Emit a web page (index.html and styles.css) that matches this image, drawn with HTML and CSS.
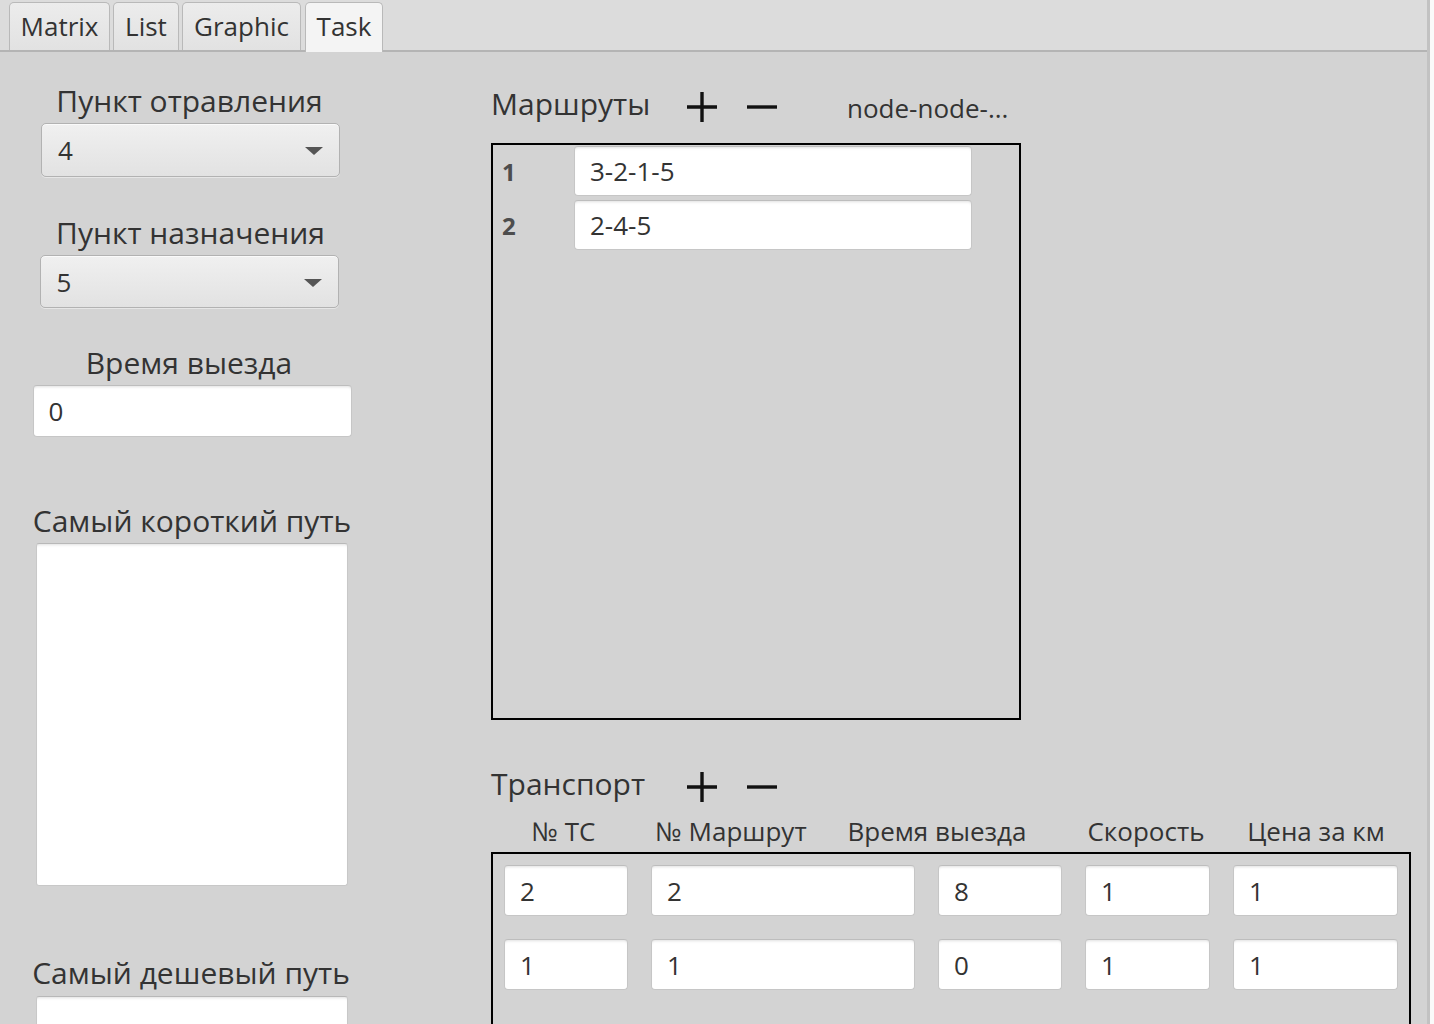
FILE: index.html
```html
<!DOCTYPE html>
<html lang="ru">
<head>
<meta charset="utf-8">
<title>Task</title>
<link rel="stylesheet" href="styles.css">
</head>
<body>
<div class="app">
  <div class="tabbar">
    <div class="tab t1">Matrix</div>
    <div class="tab t2">List</div>
    <div class="tab t3">Graphic</div>
    <div class="tab t4 active">Task</div>
  </div>
  <div class="content">
    <div class="left">
      <div class="label l1">Пункт отравления</div>
      <div class="combo c1"><span class="value">4</span><span class="arrow"></span></div>
      <div class="label l2">Пункт назначения</div>
      <div class="combo c2"><span class="value">5</span><span class="arrow"></span></div>
      <div class="label l3">Время выезда</div>
      <div class="field time">0</div>
      <div class="label l4">Самый короткий путь</div>
      <div class="area a1"></div>
      <div class="label l5">Самый дешевый путь</div>
      <div class="area a2"></div>
    </div>
    <div class="right">
      <div class="titlerow">
        <span class="title">Маршруты</span>
        <svg class="icon plus" width="32" height="32" viewBox="0 0 32 32"><path d="M16 1V31M1 16H31" stroke="#111" stroke-width="3.4" fill="none"/></svg>
        <svg class="icon minus" width="32" height="32" viewBox="0 0 32 32"><path d="M1 16H31" stroke="#111" stroke-width="3.4" fill="none"/></svg>
        <span class="hint">node-node-...</span>
      </div>
      <div class="routes">
        <div class="route"><span class="num">1</span><div class="field rfield">3-2-1-5</div></div>
        <div class="route"><span class="num">2</span><div class="field rfield">2-4-5</div></div>
      </div>
      <div class="titlerow trow">
        <span class="title">Транспорт</span>
        <svg class="icon plus" width="32" height="32" viewBox="0 0 32 32"><path d="M16 1V31M1 16H31" stroke="#111" stroke-width="3.4" fill="none"/></svg>
        <svg class="icon minus" width="32" height="32" viewBox="0 0 32 32"><path d="M1 16H31" stroke="#111" stroke-width="3.4" fill="none"/></svg>
      </div>
      <div class="heads">
        <span class="h h1">№ ТС</span>
        <span class="h h2">№ Маршрут</span>
        <span class="h h3">Время выезда</span>
        <span class="h h4">Скорость</span>
        <span class="h h5">Цена за км</span>
      </div>
      <div class="transport">
        <div class="field tf">2</div>
        <div class="field tf">2</div>
        <div class="field tf">8</div>
        <div class="field tf">1</div>
        <div class="field tf">1</div>
        <div class="field tf">1</div>
        <div class="field tf">1</div>
        <div class="field tf">0</div>
        <div class="field tf">1</div>
        <div class="field tf">1</div>
      </div>
    </div>
  </div>
</div>
</body>
</html>
```
FILE: styles.css
```css
html, body {
  margin: 0;
  padding: 0;
}
body {
  width: 1434px;
  height: 1024px;
  overflow: hidden;
  background: #fafafa;
  font-family: "Open Sans", "Noto Sans", sans-serif;
  color: #333333;
}
.app {
  width: 1427px;
  height: 1024px;
  border-right: 3px solid #c2c2c2;
  background: #d3d3d3;
  overflow: hidden;
}
.tabbar {
  display: flex;
  align-items: flex-end;
  height: 50px;
  padding-left: 9px;
  background: #dcdcdc;
  border-bottom: 2px solid #b4b4b4;
}
.tab {
  box-sizing: border-box;
  height: 48px;
  line-height: 46px;
  text-align: center;
  font-size: 26px;
  color: #333;
  background: linear-gradient(#ececec, #e2e2e2);
  border: 1px solid #b9b9b9;
  border-bottom: none;
  border-radius: 5px 5px 0 0;
  white-space: nowrap;
}
.t1 { width: 101px; }
.t2 { width: 66px; margin-left: 3px; }
.t3 { width: 119px; margin-left: 3px; }
.t4 { width: 78px; margin-left: 4px; }
.tab.active {
  height: 50px;
  margin-bottom: -2px;
  background: #f4f4f4;
  padding-bottom: 2px;
}
.content {
  display: flex;
  align-items: flex-start;
}
.left {
  display: flex;
  flex-direction: column;
  align-items: center;
  width: 320px;
  margin-left: 32px;
  padding-top: 28px;
}
.label {
  font-size: 30px;
  line-height: 41px;
  white-space: nowrap;
}
.l1 { margin-left: -5px; }
.l2 { margin-top: 35px; margin-left: -3px; }
.l3 { margin-top: 34px; margin-left: -6px; }
.l4 { margin-top: 63px; }
.l5 { margin-top: 66px; margin-left: -2px; }
.combo {
  box-sizing: border-box;
  display: flex;
  align-items: center;
  justify-content: space-between;
  width: 299px;
  margin-top: 2px;
  padding: 0 16px 0 16px;
  background: linear-gradient(#f0f0f0, #e2e2e2);
  border: 1px solid #b2b2b2;
  border-radius: 5px;
  box-shadow: 0 1px 0 #e6e6e6, inset 0 1px 0 #fafafa;
  font-size: 26px;
}
.c1 { height: 54px; margin-left: -3px; }
.c2 { height: 53px; margin-left: -6px; }
.arrow {
  width: 0;
  height: 0;
  border-left: 9px solid transparent;
  border-right: 9px solid transparent;
  border-top: 8px solid #555;
  margin-top: 2px;
}
.field {
  box-sizing: border-box;
  background: #ffffff;
  border: 1px solid #c6c6c6;
  border-top-color: #bdbdbd;
  border-radius: 4px;
  box-shadow: inset 0 3px 3px -2px rgba(0, 0, 0, 0.12);
  font-size: 26px;
  color: #333;
  display: flex;
  align-items: center;
  padding-left: 15px;
}
.time {
  width: 319px;
  height: 52px;
  margin-top: 2px;
}
.area {
  box-sizing: border-box;
  width: 312px;
  height: 343px;
  background: #ffffff;
  border: 1px solid #c8c8c8;
  border-top-color: #b8b8b8;
  border-radius: 3px;
  box-shadow: inset 0 3px 3px -2px rgba(0, 0, 0, 0.12);
  flex-shrink: 0;
}
.a1 { margin-top: 2px; }
.a2 { margin-top: 3px; }
.right {
  margin-left: 139px;
  padding-top: 31px;
  width: 920px;
}
.titlerow {
  display: flex;
  align-items: flex-start;
  height: 41px;
}
.title {
  font-size: 30px;
  line-height: 41px;
  width: 195px;
  white-space: nowrap;
}
.icon {
  display: block;
  margin-top: 8px;
  flex-shrink: 0;
}
.minus { margin-left: 28px; }
.hint {
  font-size: 26px;
  line-height: 36px;
  margin-top: 7px;
  margin-left: 69px;
  white-space: nowrap;
}
.routes {
  box-sizing: border-box;
  width: 530px;
  height: 577px;
  margin-top: 19px;
  border: 2px solid #000;
  padding: 1px 0 0 9px;
  display: flex;
  flex-direction: column;
  gap: 4px;
}
.route {
  display: flex;
  align-items: center;
}
.num {
  width: 72px;
  font-size: 24px;
  font-weight: 700;
  color: #4d4d4d;
}
.rfield {
  width: 398px;
  height: 50px;
}
.trow { margin-top: 43px; }
.heads {
  display: flex;
  margin-top: 9px;
  font-size: 26px;
  line-height: 36px;
}
.h {
  text-align: center;
  white-space: nowrap;
}
.h1 { width: 145px; }
.h2 { width: 190px; }
.h3 { width: 222px; }
.h4 { width: 196px; }
.h5 { width: 144px; }
.transport {
  box-sizing: border-box;
  width: 920px;
  height: 240px;
  margin-top: 3px;
  border: 2px solid #000;
  padding: 11px 0 0 11px;
  display: grid;
  grid-template-columns: 124px 264px 124px 125px 165px;
  grid-auto-rows: 51px;
  column-gap: 23px;
  row-gap: 23px;
  align-content: start;
}
```
